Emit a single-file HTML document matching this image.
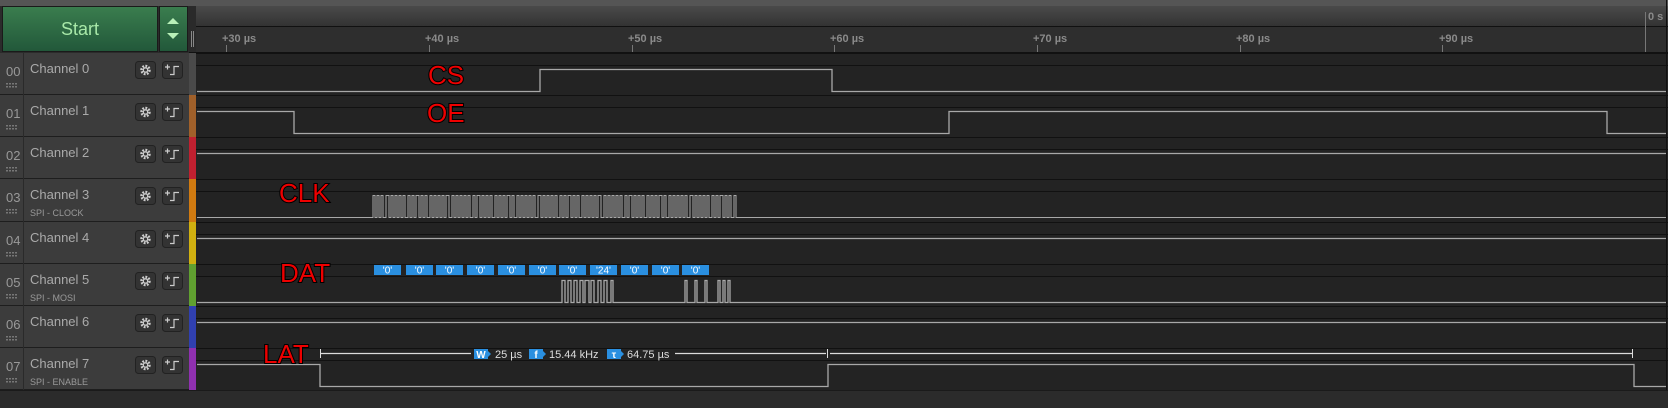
<!DOCTYPE html>
<html><head><meta charset="utf-8">
<style>
body{margin:0;width:1668px;height:408px;background:#2b2b2b;overflow:hidden;font-family:"Liberation Sans",sans-serif;position:relative}
.abs{position:absolute}
</style></head><body>
<div class="abs" style="left:0;top:0;width:1668px;height:6px;background:#555"></div>
<div class="abs" style="top:6px;left:2px;width:156px;height:46px;background:linear-gradient(#3a7d4e,#22583a);border:1px solid #1a1a1a;box-sizing:border-box;color:#a8e8a8;font-size:18px;text-align:center;line-height:44px">Start</div>
<div class="abs" style="left:159px;top:6px;width:29px;height:46px;background:linear-gradient(#3a7d4e,#22583a);border:1px solid #1a1a1a;box-sizing:border-box"></div>
<div class="abs" style="left:167px;top:18px;width:0;height:0;border-left:6px solid transparent;border-right:6px solid transparent;border-bottom:6px solid #b8f0b8"></div>
<div class="abs" style="left:167px;top:33px;width:0;height:0;border-left:6px solid transparent;border-right:6px solid transparent;border-top:6px solid #b8f0b8"></div>
<svg class="abs" style="left:0;top:0" width="1668" height="408" xmlns="http://www.w3.org/2000/svg" font-family="Liberation Sans, sans-serif">
<defs><linearGradient id="g1" x1="0" y1="0" x2="0" y2="1"><stop offset="0" stop-color="#4a4a4a"/><stop offset="1" stop-color="#333"/></linearGradient></defs>
<rect x="189" y="6" width="1479" height="20" fill="url(#g1)"/>
<rect x="189" y="27" width="1479" height="25" fill="#2e2e2e"/>
<line x1="189" y1="26.5" x2="1668" y2="26.5" stroke="#111"/>
<line x1="189" y1="52.5" x2="1668" y2="52.5" stroke="#111"/>
<rect x="189" y="6" width="7" height="46" fill="#2a2a2a"/>
<line x1="191.5" y1="31" x2="191.5" y2="47" stroke="#888"/><line x1="193.5" y1="31" x2="193.5" y2="47" stroke="#888"/>
<g fill="#8a8a8a" font-size="11" font-weight="bold">
<text x="222" y="42">+30 µs</text><text x="425" y="42">+40 µs</text><text x="628" y="42">+50 µs</text><text x="830" y="42">+60 µs</text><text x="1033" y="42">+70 µs</text><text x="1236" y="42">+80 µs</text><text x="1439" y="42">+90 µs</text>
<text x="1648" y="20">0 s</text>
</g>
<g stroke="#777"><line x1="226.5" y1="45" x2="226.5" y2="52"/><line x1="429.5" y1="45" x2="429.5" y2="52"/><line x1="632.5" y1="45" x2="632.5" y2="52"/><line x1="834.5" y1="45" x2="834.5" y2="52"/><line x1="1037.5" y1="45" x2="1037.5" y2="52"/><line x1="1240.5" y1="45" x2="1240.5" y2="52"/><line x1="1442.5" y1="45" x2="1442.5" y2="52"/><line x1="1645.5" y1="12" x2="1645.5" y2="52"/></g>
<g id="rows"></g>
</svg>
<script>
var ns="http://www.w3.org/2000/svg",g=document.getElementById('rows');
function el(t,a,txt){var e=document.createElementNS(ns,t);for(var k in a)e.setAttribute(k,a[k]);if(txt)e.textContent=txt;g.appendChild(e);return e}
var cols=["#4a4a4a","#a0602a","#c02030","#d07a10","#d0b010","#60a030","#3040b0","#9030b0"];
var subs=["","","","SPI - CLOCK","","SPI - MOSI","","SPI - ENABLE"];
for(var i=0;i<8;i++){
 var t=Math.round(53+42.15*i),h=Math.round(53+42.15*(i+1))-t;
 el('rect',{x:0,y:t,width:189,height:h,fill:"#3c3c3c"});
 el('line',{x1:0,y1:t+h-0.5,x2:189,y2:t+h-0.5,stroke:"#1e1e1e"});
 el('line',{x1:23.5,y1:t,x2:23.5,y2:t+h,stroke:"#2a2a2a"});
 el('text',{x:6,y:t+23,fill:"#999","font-size":13},"0"+i);
 for(var d=0;d<4;d++){el('rect',{x:6+d*3,y:t+30,width:2,height:1.5,fill:"#777"});el('rect',{x:6+d*3,y:t+33,width:2,height:1.5,fill:"#777"});}
 el('text',{x:30,y:t+20,fill:"#aaa","font-size":13},"Channel "+i);
 if(subs[i])el('text',{x:30,y:t+37,fill:"#999","font-size":9},subs[i]);
 el('rect',{x:135.5,y:t+8.5,width:20,height:17,rx:3,fill:"#333",stroke:"#222"});
 el('circle',{cx:145.5,cy:t+17,r:4,fill:"none",stroke:"#ccc","stroke-width":2.5,"stroke-dasharray":"1.8 1.3"});
 el('circle',{cx:145.5,cy:t+17,r:2.2,fill:"none",stroke:"#ccc","stroke-width":1.3});
 el('rect',{x:162.5,y:t+8.5,width:20,height:17,rx:3,fill:"#333",stroke:"#222"});
 el('path',{d:"M165 "+(t+14)+"h5M167.5 "+(t+11.5)+"v5M170 "+(t+21.5)+"h4v-8h5",fill:"none",stroke:"#ccc","stroke-width":1.2});
 el('rect',{x:189,y:t,width:7,height:h,fill:cols[i]});
 el('rect',{x:196,y:t,width:1472,height:h,fill:"#232323"});
 el('line',{x1:196,y1:t+0.5,x2:1668,y2:t+0.5,stroke:"#111"});
 el('line',{x1:196,y1:t+12.5,x2:1668,y2:t+12.5,stroke:"#111"});
}
el('line',{x1:1666.5,y1:0,x2:1666.5,y2:390,stroke:"#111"});
el('rect',{x:0,y:390,width:1668,height:18,fill:"#2b2b2b"});
el('line',{x1:0,y1:390.5,x2:1668,y2:390.5,stroke:"#1a1a1a"});
function R(i){return Math.round(53+42.15*i)}
function wave(i,tr,startHigh,sw){var H=R(i)+16.5,L=R(i)+38.5,y=startHigh?H:L,d="M197 "+y;tr.forEach(function(x){d+="H"+x;y=(y==H?L:H);d+="V"+y});d+="H1666";el('path',{d:d,fill:"none",stroke:"#a8a8a8","stroke-width":sw||1.3})}
wave(0,[540,832],0);wave(1,[294,949,1607],1);wave(2,[],1);wave(4,[],1);wave(6,[],1);wave(7,[320,828,1634],1);
var tr=[],x=373,k=0;while(x<738){tr.push(x);x+=(k%7==3?3:2);tr.push(x);x+=(k%5==2?3:2);k++;}
wave(3,tr,0,1);
wave(5,[562,565,568,571,574,577,580,583,585,589,591,594,598,601,604,607,611,613,685,687,695,697,705,707,718,720,723,725,728,730],0);
var bx=[374,406,436,467,498,529,559,590,621,652,682];
bx.forEach(function(x,k){el('rect',{x:x,y:265,width:27,height:10,fill:"#2a8fe0"});el('text',{x:x+13.5,y:273.5,fill:"#fff","font-size":10,"text-anchor":"middle"},k==7?"'24'":"'0'")});
el('path',{d:"M320 353.5H471M675 353.5H826M830 353.5H1632",stroke:"#ddd","stroke-width":1.2});
el('path',{d:"M320.5 349v9M827.5 349v9M1632.5 349v9",stroke:"#ddd"});
[[474,"W",495,"25 µs"],[529,"f",549,"15.44 kHz"],[607,"τ",627,"64.75 µs"]].forEach(function(a){el('rect',{x:a[0],y:349,width:14,height:10,fill:"#2a8fe0"});el('path',{d:"M"+(a[0]+14)+" 351l3 3-3 3z",fill:"#2a8fe0"});el('text',{x:a[0]+7,y:358,fill:"#fff","font-size":10,"font-weight":"bold","text-anchor":"middle"},a[1]);el('text',{x:a[2],y:358,fill:"#ddd","font-size":11},a[3])});
[[428,84,"CS"],[427,122,"OE"],[279,202,"CLK"],[280,282,"DAT"],[263,363,"LAT"]].forEach(function(a){el('text',{x:a[0],y:a[1],fill:"#ee0000",stroke:"#000","stroke-width":2,"paint-order":"stroke","font-size":26},a[2])});
</script>
</body></html>
